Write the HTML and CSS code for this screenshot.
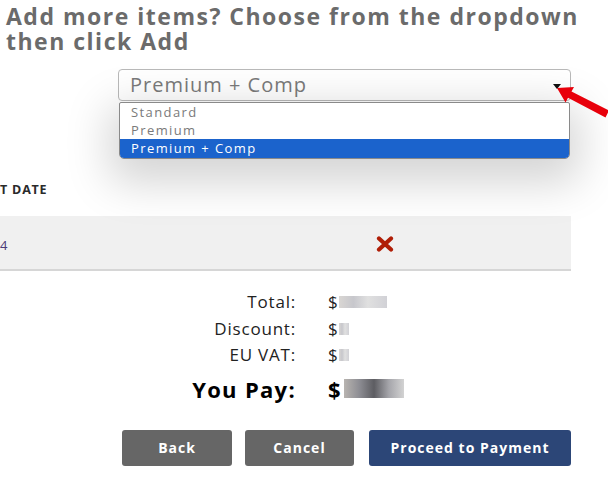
FILE: index.html
```html
<!DOCTYPE html>
<html>
<head>
<meta charset="utf-8">
<link rel="stylesheet" href="styles.css">
</head>
<body>
<div class="page">
  <h2 class="title">Add more items? Choose from the dropdown then click Add</h2>

  <div class="picker">
    <div class="select">
      <span class="select-value">Premium + Comp</span>
      <span class="caret"></span>
    </div>
    <ul class="options">
      <li class="option">Standard</li>
      <li class="option">Premium</li>
      <li class="option selected">Premium + Comp</li>
    </ul>
    <svg class="pointer" width="58" height="42" viewBox="0 0 58 42">
      <polygon points="7,9 24,8 21.5,12.6 59,31.5 55.5,38.5 18,18.8 15.5,23.5" fill="#e8000b"/>
    </svg>
  </div>

  <div class="items">
    <div class="items-head">T DATE</div>
    <div class="items-row">
      <span class="date">4</span>
      <svg class="remove" width="18" height="16" viewBox="0 0 18 16">
        <path d="M3 2.5 L15 13.5 M15 2.5 L3 13.5" stroke="#b01e07" stroke-width="4.2" stroke-linecap="round"/>
      </svg>
    </div>
  </div>

  <div class="totals">
    <span class="label">Total:</span>
    <span class="value">$<i class="blur wide"></i></span>
    <span class="label">Discount:</span>
    <span class="value">$<i class="blur narrow"></i></span>
    <span class="label">EU VAT:</span>
    <span class="value">$<i class="blur narrow"></i></span>
    <span class="label pay">You Pay:</span>
    <span class="value pay">$<i class="blur big"></i></span>
  </div>

  <div class="actions">
    <button class="btn btn-gray btn-back">Back</button>
    <button class="btn btn-gray btn-cancel">Cancel</button>
    <button class="btn btn-blue">Proceed to Payment</button>
  </div>
</div>
</body>
</html>
```

FILE: styles.css
```css
* { box-sizing: border-box; }
html, body { margin: 0; padding: 0; background: #fff; }
body {
  font-family: "Open Sans", "Liberation Sans", sans-serif;
  width: 608px;
  height: 477px;
  overflow: hidden;
}
.page { position: relative; width: 608px; }

.title {
  margin: 0;
  padding: 4px 0 0 6px;
  width: 600px;
  font-size: 23px;
  line-height: 25px;
  letter-spacing: 1.5px;
  font-weight: 700;
  color: #6b6b6b;
}

.picker {
  position: relative;
  margin: 15px 0 0 118px;
  width: 453px;
}
.select {
  height: 32px;
  border: 1px solid #b9b9b9;
  border-radius: 4px;
  display: flex;
  align-items: center;
  justify-content: space-between;
  padding: 0 9px 0 11px;
  background: #fff;
}
.select-value {
  font-size: 20px;
  letter-spacing: 1px;
  color: #7a7a7a;
  line-height: 24px;
}
.caret {
  width: 0; height: 0;
  border-left: 4px solid transparent;
  border-right: 4px solid transparent;
  border-top: 5px solid #111;
  margin-top: 2px;
}
.options {
  position: absolute;
  top: 33px;
  left: 1px;
  width: 451px;
  margin: 0;
  padding: 0;
  list-style: none;
  background: #fff;
  border: 1px solid #8a8a8a;
  border-radius: 2px 2px 5px 5px;
  overflow: hidden;
  box-shadow: 0 14px 44px 10px rgba(0,0,0,0.17);
  z-index: 2;
}
.option {
  font-size: 13px;
  letter-spacing: 1.4px;
  line-height: 18px;
  height: 18px;
  padding-left: 11px;
  color: #7a7a7a;
}
.option.selected {
  background: #1b63cc;
  color: #fff;
  height: 19px;
}
.pointer {
  position: absolute;
  left: 432px;
  top: 10px;
  z-index: 3;
}

.items { margin-top: 82px; width: 571px; }
.items-head {
  font-size: 12.5px;
  letter-spacing: 0.8px;
  font-weight: 700;
  color: #2a2a2a;
  line-height: 14px;
  height: 33px;
}
.items-row {
  height: 55px;
  background: #f0f0f0;
  border-bottom: 2px solid #d6d6d6;
  display: grid;
  grid-template-columns: 376px 18px;
  align-items: center;
}
.date {
  font-size: 13px;
  color: #4a3b78;
  padding-top: 4px;
}
.remove { display: block; margin-top: 2px; }

.totals {
  display: grid;
  grid-template-columns: 296px auto;
  column-gap: 32px;
  margin-top: 18px;
  align-items: center;
}
.label {
  text-align: right;
  font-size: 17px;
  letter-spacing: 0.8px;
  line-height: 26.5px;
  color: #222;
}
.value {
  font-size: 17px;
  line-height: 26.5px;
  color: #222;
  display: flex;
  align-items: center;
}
.label.pay, .value.pay {
  font-size: 22px;
  letter-spacing: 1.3px;
  font-weight: 700;
  color: #000;
  line-height: 28px;
  margin-top: 6px;
}
.blur {
  display: inline-block;
  background: linear-gradient(90deg, #d9d6d3, #c7c7cc 30%, #e0e0e0 60%, #d1d1d6);
  height: 12px;
  margin-left: 1px;
}
.blur.wide { width: 48px; }
.blur.narrow { width: 10px; }
.blur.big {
  width: 60px;
  height: 19px;
  margin-left: 2px;
  background: linear-gradient(90deg, #b8b4b0, #8e8e94 25%, #5d5d62 50%, #a6a6ab 75%, #d3d3d3);
}

.actions {
  display: flex;
  margin: 27px 0 0 122px;
}
.btn {
  height: 36px;
  border: none;
  border-radius: 3px;
  color: #fff;
  font-family: "Open Sans", "Liberation Sans", sans-serif;
  font-weight: 700;
  font-size: 14px;
  letter-spacing: 1px;
  padding: 0;
}
.btn-gray { background: #666; }
.btn-back { width: 110px; margin-right: 13px; }
.btn-cancel { width: 109px; margin-right: 15px; }
.btn-blue { background: #2c4677; width: 202px; }
```
